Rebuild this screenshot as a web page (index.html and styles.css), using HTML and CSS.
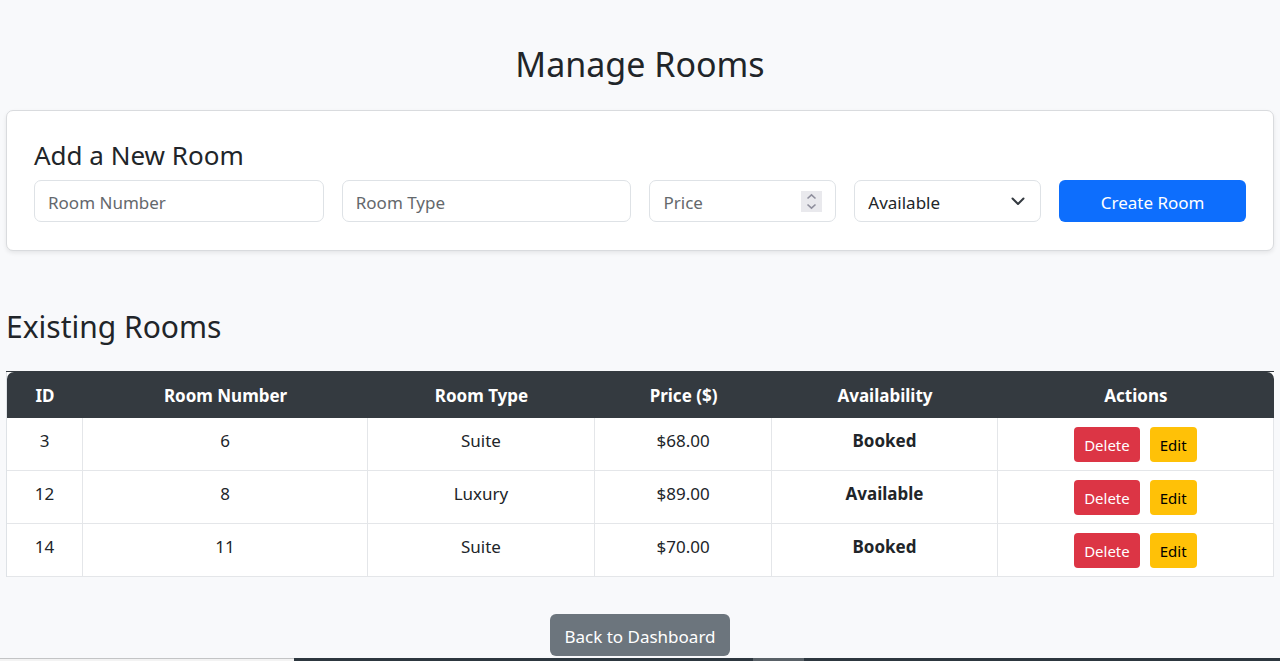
FILE: index.html
```html
<!DOCTYPE html>
<html lang="en">
<head>
  <meta charset="utf-8">
  <meta name="viewport" content="width=device-width, initial-scale=1">
  <title>Manage Rooms</title>
  <link rel="stylesheet" href="styles.css">
</head>
<body>
  <main class="page">
    <h1 class="page-title">Manage Rooms</h1>

    <section class="card">
      <h2 class="card-title">Add a New Room</h2>
      <form class="room-form">
        <input class="field" type="text" placeholder="Room Number" aria-label="Room Number">
        <input class="field" type="text" placeholder="Room Type" aria-label="Room Type">
        <div class="control">
          <input class="field field-number" type="number" placeholder="Price" aria-label="Price">
          <svg class="spinner" viewBox="0 0 21 21" aria-hidden="true">
            <path d="M6.5 7.5 10.5 3.8 14.5 7.5M6.5 13.5 10.5 17.2 14.5 13.5"/>
          </svg>
        </div>
        <div class="control">
          <select class="field field-select" aria-label="Availability">
            <option>Available</option>
            <option>Booked</option>
          </select>
          <svg class="chevron" viewBox="0 0 16 16" aria-hidden="true">
            <path d="m2.5 5.5 5.5 5.5 5.5-5.5"/>
          </svg>
        </div>
        <button class="btn btn-primary" type="submit">Create Room</button>
      </form>
    </section>

    <h2 class="section-title">Existing Rooms</h2>
    <div class="table-frame">
      <table class="rooms">
        <colgroup>
          <col class="col-id"><col class="col-number"><col class="col-type">
          <col class="col-price"><col class="col-status"><col class="col-actions">
        </colgroup>
        <thead>
          <tr><th>ID</th><th>Room Number</th><th>Room Type</th><th>Price ($)</th><th>Availability</th><th>Actions</th></tr>
        </thead>
        <tbody>
          <tr>
            <td>3</td><td>6</td><td>Suite</td><td>$68.00</td><td><strong>Booked</strong></td>
            <td><div class="actions"><button class="btn-sm btn-danger" type="button">Delete</button><button class="btn-sm btn-warning" type="button">Edit</button></div></td>
          </tr>
          <tr>
            <td>12</td><td>8</td><td>Luxury</td><td>$89.00</td><td><strong>Available</strong></td>
            <td><div class="actions"><button class="btn-sm btn-danger" type="button">Delete</button><button class="btn-sm btn-warning" type="button">Edit</button></div></td>
          </tr>
          <tr>
            <td>14</td><td>11</td><td>Suite</td><td>$70.00</td><td><strong>Booked</strong></td>
            <td><div class="actions"><button class="btn-sm btn-danger" type="button">Delete</button><button class="btn-sm btn-warning" type="button">Edit</button></div></td>
          </tr>
        </tbody>
      </table>
    </div>

    <a class="btn btn-secondary" href="#">Back to Dashboard</a>
  </main>
  <div class="strip" aria-hidden="true">
    <div class="strip-light"></div>
    <div class="strip-dark"></div>
    <div class="strip-active"></div>
    <div class="strip-dark strip-end"></div>
  </div>
</body>
</html>
```
FILE: styles.css
```css
* {
  box-sizing: border-box;
}

body {
  display: flex;
  flex-direction: column;
  min-height: 100vh;
  margin: 0;
  background: #f8f9fb;
  color: #212529;
  font: 17px/27px "Segoe UI", "Noto Sans", sans-serif;
}

.page {
  display: flex;
  flex-direction: column;
  padding: 42px 6px 0;
}

h1,
h2 {
  margin: 0;
  font-weight: 400;
}

.page-title {
  margin-bottom: 24px;
  font-size: 34px;
  line-height: 44px;
  text-align: center;
}

.card {
  padding: 27px 27px 28px;
  border: 1px solid #d9dbde;
  border-radius: 7px;
  background: #fff;
  box-shadow: 0 2px 4px rgba(0, 0, 0, 0.08);
}

.card-title {
  margin-bottom: 8px;
  font-size: 26px;
  line-height: 34px;
}

.room-form {
  display: grid;
  grid-template-columns: 290fr 290fr 187fr 187fr 187fr;
  gap: 18px;
}

.control {
  position: relative;
  min-width: 0;
}

.field {
  display: block;
  width: 100%;
  min-width: 0;
  height: 42px;
  margin: 0;
  padding: 2px 13px 0;
  border: 1px solid #dee2e6;
  border-radius: 7px;
  background: #fff;
  color: #212529;
  font: inherit;
  appearance: none;
}

.field::placeholder {
  color: #64686c;
  opacity: 1;
}

.field-number {
  appearance: textfield;
}

.field-number::-webkit-inner-spin-button {
  appearance: none;
}

.spinner {
  position: absolute;
  top: 11px;
  right: 14px;
  width: 21px;
  height: 21px;
  background: #e9e9ed;
  fill: none;
  stroke: #8f8f9d;
  stroke-width: 1.6;
  pointer-events: none;
}

.chevron {
  position: absolute;
  top: 13px;
  right: 15px;
  width: 16px;
  height: 16px;
  fill: none;
  stroke: #343a40;
  stroke-width: 2;
  stroke-linecap: round;
  stroke-linejoin: round;
  pointer-events: none;
}

.btn {
  height: 42px;
  padding: 9px 14px 6px;
  border: 0;
  border-radius: 6px;
  color: #fff;
  font: inherit;
  text-align: center;
  text-decoration: none;
  white-space: nowrap;
}

.btn-primary {
  background: #0d6efd;
}

.btn-secondary {
  align-self: center;
  margin-top: 37px;
  background: #6c757d;
}

.section-title {
  margin: 56px 0 24px;
  font-size: 30px;
  line-height: 40px;
}

.table-frame {
  border-top: 1px solid #343a40;
  background: #fff;
}

.rooms {
  width: 100%;
  border-spacing: 0;
  border-left: 1px solid #dee2e6;
  table-layout: fixed;
  text-align: center;
}

.col-id { width: 6%; }
.col-number { width: 22.5%; }
.col-type { width: 17.9%; }
.col-price { width: 14%; }
.col-status { width: 17.8%; }
.col-actions { width: 21.8%; }

th {
  padding: 10px 9px 9px;
  background: #343a40;
  color: #fff;
}

th:first-child {
  border-top-left-radius: 7px;
}

th:last-child {
  border-top-right-radius: 7px;
}

td {
  padding: 9px 9px 8px;
  border-right: 1px solid #e4e6e9;
  border-bottom: 1px solid #e4e6e9;
  vertical-align: top;
}

.actions {
  display: flex;
  justify-content: center;
  gap: 10px;
}

.btn-sm {
  height: 35px;
  padding: 2px 10px 0;
  border: 0;
  border-radius: 4px;
  font: inherit;
  font-size: 15px;
}

.btn-danger {
  background: #dc3545;
  color: #fff;
}

.btn-warning {
  background: #ffc107;
  color: #000;
}

.strip {
  display: flex;
  height: 3px;
  margin-top: auto;
}

.strip-light {
  width: 23%;
  border-top: 1px solid #c3c4c5;
  background: #f3f3f3;
}

.strip-dark {
  flex: 1;
  background: #2d373f;
}

.strip-active {
  width: 4%;
  background: #596167;
}

.strip-end {
  flex: 0 0 37.2%;
}
```
